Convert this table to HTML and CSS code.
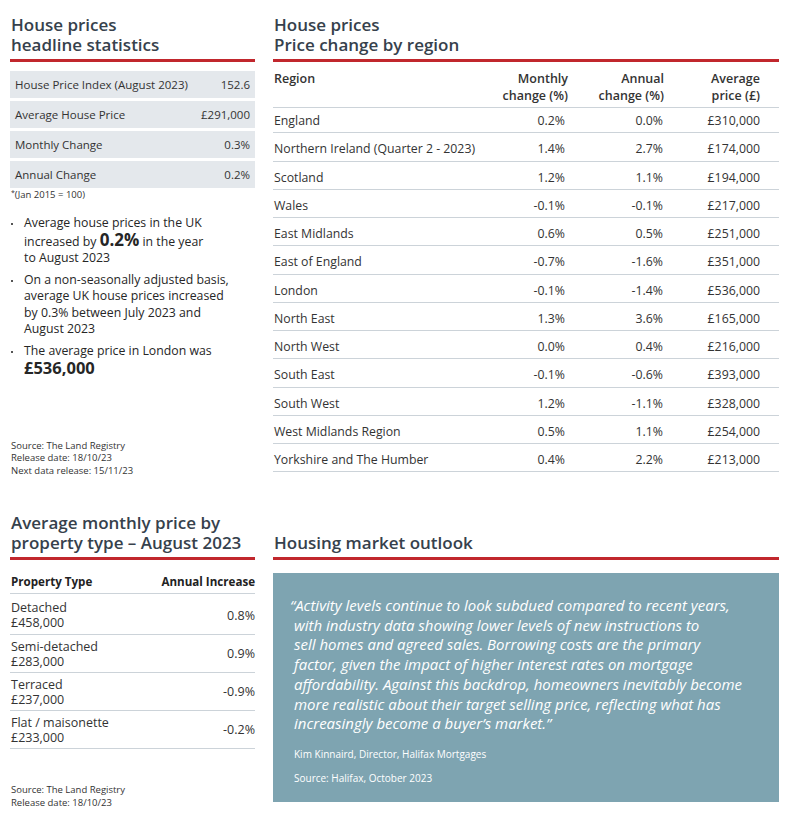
FILE: index.html
```html
<!DOCTYPE html>
<html lang="en">
<head>
<meta charset="utf-8">
<title>House prices</title>
<link rel="stylesheet" href="styles.css">
</head>
<body>
<div class="page">
  <section class="col col-left top">
    <h2 class="heading">House prices<br>headline statistics</h2>
    <div class="stats">
      <div class="stat"><span>House Price Index (August 2023)</span><span>152.6</span></div>
      <div class="stat"><span>Average House Price</span><span>£291,000</span></div>
      <div class="stat"><span>Monthly Change</span><span>0.3%</span></div>
      <div class="stat"><span>Annual Change</span><span>0.2%</span></div>
    </div>
    <p class="footnote"><sup>*</sup>(Jan 2015 = 100)</p>
    <ul class="bullets">
      <li>Average house prices in the UK<br>increased by <strong class="big">0.2%</strong> in the year<br>to August 2023</li>
      <li>On a non-seasonally adjusted basis,<br>average UK house prices increased<br>by 0.3% between July 2023 and<br>August 2023</li>
      <li>The average price in London was<br><strong class="bigger">£536,000</strong></li>
    </ul>
    <p class="source">Source: The Land Registry<br>Release date: 18/10/23<br>Next data release: 15/11/23</p>
  </section>

  <section class="col col-right top">
    <h2 class="heading">House prices<br>Price change by region</h2>
    <table class="regions">
      <thead>
        <tr><th class="name">Region</th><th>Monthly<br>change (%)</th><th>Annual<br>change (%)</th><th>Average<br>price (£)</th></tr>
      </thead>
      <tbody>
        <tr><td class="name">England</td><td>0.2%</td><td>0.0%</td><td>£310,000</td></tr>
        <tr><td class="name">Northern Ireland (Quarter 2 - 2023)</td><td>1.4%</td><td>2.7%</td><td>£174,000</td></tr>
        <tr><td class="name">Scotland</td><td>1.2%</td><td>1.1%</td><td>£194,000</td></tr>
        <tr><td class="name">Wales</td><td>-0.1%</td><td>-0.1%</td><td>£217,000</td></tr>
        <tr><td class="name">East Midlands</td><td>0.6%</td><td>0.5%</td><td>£251,000</td></tr>
        <tr><td class="name">East of England</td><td>-0.7%</td><td>-1.6%</td><td>£351,000</td></tr>
        <tr><td class="name">London</td><td>-0.1%</td><td>-1.4%</td><td>£536,000</td></tr>
        <tr><td class="name">North East</td><td>1.3%</td><td>3.6%</td><td>£165,000</td></tr>
        <tr><td class="name">North West</td><td>0.0%</td><td>0.4%</td><td>£216,000</td></tr>
        <tr><td class="name">South East</td><td>-0.1%</td><td>-0.6%</td><td>£393,000</td></tr>
        <tr><td class="name">South West</td><td>1.2%</td><td>-1.1%</td><td>£328,000</td></tr>
        <tr><td class="name">West Midlands Region</td><td>0.5%</td><td>1.1%</td><td>£254,000</td></tr>
        <tr><td class="name">Yorkshire and The Humber</td><td>0.4%</td><td>2.2%</td><td>£213,000</td></tr>
      </tbody>
    </table>
  </section>

  <section class="col col-left bottom">
    <h2 class="heading">Average monthly price by<br>property type – August 2023</h2>
    <table class="types">
      <thead>
        <tr><th class="name">Property Type</th><th>Annual Increase</th></tr>
      </thead>
      <tbody>
        <tr><td class="name">Detached<br>£458,000</td><td>0.8%</td></tr>
        <tr><td class="name">Semi-detached<br>£283,000</td><td>0.9%</td></tr>
        <tr><td class="name">Terraced<br>£237,000</td><td>-0.9%</td></tr>
        <tr><td class="name">Flat / maisonette<br>£233,000</td><td>-0.2%</td></tr>
      </tbody>
    </table>
    <p class="source">Source: The Land Registry<br>Release date: 18/10/23</p>
  </section>

  <section class="col col-right bottom">
    <h2 class="heading">Housing market outlook</h2>
    <div class="quote">
      <p class="quote-text">“Activity levels continue to look subdued compared to recent years,<br>with industry data showing lower levels of new instructions to<br>sell homes and agreed sales. Borrowing costs are the primary<br>factor, given the impact of higher interest rates on mortgage<br>affordability. Against this backdrop, homeowners inevitably become<br>more realistic about their target selling price, reflecting what has<br>increasingly become a buyer’s market.”</p>
      <p class="quote-meta">Kim Kinnaird, Director, Halifax Mortgages</p>
      <p class="quote-meta">Source: Halifax, October 2023</p>
    </div>
  </section>
</div>
</body>
</html>
```

FILE: styles.css
```css
* { box-sizing: border-box; }

html, body {
  margin: 0;
  padding: 0;
  background: #ffffff;
}

body {
  font-family: "Open Sans", "Noto Sans", sans-serif;
  color: #333333;
}

.page {
  display: grid;
  grid-template-columns: 245px 506px;
  column-gap: 18px;
  padding: 15px 8px 0 10px;
  width: 787px;
}

.col {
  display: flex;
  flex-direction: column;
}

.top { height: 462px; }

.bottom { padding-top: 36px; }

.heading {
  margin: 0;
  min-height: 47px;
  display: flex;
  flex-direction: column;
  justify-content: flex-end;
  font-size: 17px;
  line-height: 20px;
  font-weight: 600;
  color: #36414c;
  padding: 0 0 4px 1px;
  border-bottom: 3px solid #c1272d;
}

.top .heading { justify-content: flex-start; }

/* headline stats */
.stats {
  margin-top: 9px;
  display: flex;
  flex-direction: column;
  gap: 3px;
}

.stat {
  display: flex;
  justify-content: space-between;
  align-items: center;
  height: 27px;
  padding: 0 5px;
  background: #e4e8ec;
  font-size: 11.5px;
  color: #333;
}

.footnote {
  margin: 1px 0 0 1px;
  font-size: 9.5px;
  line-height: 12px;
  color: #333;
}

.footnote sup {
  font-size: 7px;
  vertical-align: 3px;
  line-height: 0;
}

.bullets {
  list-style: none;
  margin: 14px 0 0;
  padding: 0;
}

.bullets li {
  position: relative;
  padding: 0 0 0 14px;
  font-size: 12.3px;
  line-height: 16.5px;
  color: #262626;
  margin-bottom: 5px;
  white-space: nowrap;
}

.bullets li::before {
  content: "";
  position: absolute;
  left: 1px;
  top: 8px;
  width: 2px;
  height: 2px;
  background: #555;
}

.big {
  font-size: 17px;
  font-weight: 700;
}

.bigger {
  font-size: 16.5px;
  font-weight: 700;
  display: inline-block;
  line-height: 18px;
}

.source {
  margin: auto 0 0 1px;
  font-size: 9.5px;
  line-height: 12.5px;
  color: #333;
}

/* region table */
table {
  border-collapse: collapse;
  width: 100%;
}

.regions th {
  font-size: 12.5px;
  font-weight: 600;
  line-height: 17px;
  color: #333;
  text-align: right;
  vertical-align: top;
  padding: 8px 0 3px 0;
  border-bottom: 1px solid #ccd3d9;
}

.regions th.name, .regions td.name {
  text-align: left;
  padding-left: 1px;
  white-space: nowrap;
}

.regions th:nth-child(2) { width: 88px; padding-right: 0; }
.regions th:nth-child(3) { width: 96px; }
.regions th:nth-child(4) { width: 115px; padding-right: 19px; }

.regions td {
  font-size: 12.3px;
  line-height: 15px;
  text-align: right;
  padding: 8px 0 4.25px 0;
  border-bottom: 1px solid #ccd3d9;
  color: #333;
}

.regions td:nth-child(2) { padding-right: 3px; }
.regions td:nth-child(3) { padding-right: 1px; }
.regions td:nth-child(4) { padding-right: 19px; }

.regions tbody tr:first-child td { padding-top: 5px; }

/* property types table */
.types th {
  font-size: 11.6px;
  font-weight: 700;
  line-height: 15px;
  text-align: right;
  padding: 14px 0 4px 0;
  border-bottom: 1px solid #ccd3d9;
  color: #222;
}

.types th.name, .types td.name {
  text-align: left;
  padding-left: 1px;
}

.types td {
  font-size: 12.5px;
  line-height: 15px;
  text-align: right;
  padding: 3.5px 0 3.5px;
  border-bottom: 1px solid #ccd3d9;
  color: #333;
}

.types tbody tr:first-child td { padding-top: 6px; padding-bottom: 4px; }

.bottom .source { margin-top: 35px; }

/* quote */
.quote {
  margin-top: 13px;
  background: #7ea4b1;
  color: #ffffff;
  padding: 23px 10px 20px 21px;
  height: 229px;
}

.quote-text {
  margin: 0;
  font-style: italic;
  font-size: 15px;
  line-height: 19.7px;
  text-indent: -4px;
  white-space: nowrap;
}

.quote-meta {
  margin: 14px 0 0 0;
  font-size: 10px;
  line-height: 12px;
}

.quote-meta + .quote-meta { margin-top: 12px; }
```
